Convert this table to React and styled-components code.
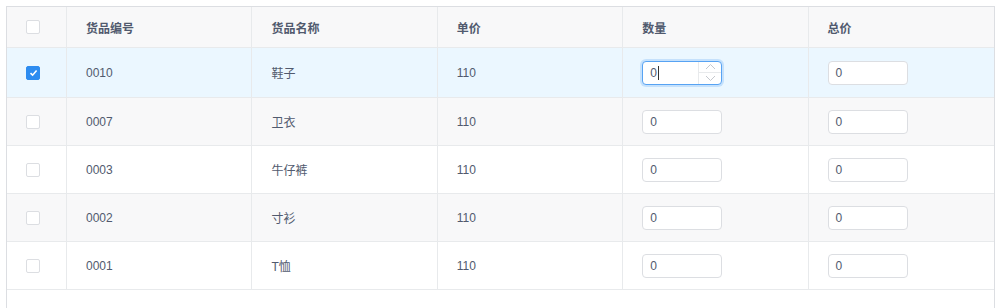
import styled, { createGlobalStyle } from "styled-components"

const GlobalStyle = createGlobalStyle`
  body {
    margin: 0;
    background: #fff;
    font-family: "Liberation Sans", "Noto Sans CJK SC", sans-serif;
  }
`

const goods = [
  { id: "0010", name: "鞋子", price: 110, count: 0, total: 0, checked: true },
  { id: "0007", name: "卫衣", price: 110, count: 0, total: 0 },
  { id: "0003", name: "牛仔裤", price: 110, count: 0, total: 0 },
  { id: "0002", name: "寸衫", price: 110, count: 0, total: 0 },
  { id: "0001", name: "T恤", price: 110, count: 0, total: 0 },
]

const Page = styled.div`
  padding: 6px 8px 0 6px;
`

const TableBox = styled.div`
  border: 1px solid #dcdee2;
  border-bottom: none;
  height: 301px;
  overflow: hidden;
  font-size: 12px;
  color: #515a6e;
`

const Row = styled.div`
  display: grid;
  grid-template-columns: 60px repeat(5, 1fr);
  height: ${props => props.head ? "40px" : props.first ? "49px" : "47px"};
  border-bottom: 1px solid #e8eaec;
  background: ${props => props.head ? "#f8f8f9" : props.active ? "#ebf7ff" : props.stripe ? "#f8f8f9" : "#fff"};
  font-weight: ${props => props.head ? 700 : 400};
`

const Cell = styled.div`
  display: flex;
  align-items: center;
  padding-left: 19px;
  border-right: ${props => props.last ? "none" : "1px solid #e8eaec"};
  color: #515a6e;
`

const Check = styled.span`
  width: 14px;
  height: 14px;
  box-sizing: border-box;
  border-radius: 2px;
  border: 1px solid ${props => props.checked ? "#2d8cf0" : "#dcdee2"};
  background: ${props => props.checked ? "#2d8cf0" : "#fff"};
  display: flex;
  align-items: center;
  justify-content: center;
`

const Field = styled.div`
  width: 80px;
  height: 24px;
  box-sizing: border-box;
  border: 1px solid ${props => props.focused ? "#57a3f3" : "#dcdee2"};
  box-shadow: ${props => props.focused ? "0 0 0 2px rgba(45,140,240,.2)" : "none"};
  border-radius: 4px;
  background: #fff;
  display: flex;
  align-items: stretch;
  font-weight: 400;
`

const FieldText = styled.span`
  flex: 1;
  display: flex;
  align-items: center;
  padding-left: 7px;
  font-size: 12px;
  color: #515a6e;
`

const Caret = styled.span`
  width: 1px;
  height: 14px;
  background: #333;
  margin-left: 1px;
`

const Handler = styled.div`
  width: 22px;
  border-left: 1px solid #e8eaec;
  display: flex;
  flex-direction: column;
`

const Step = styled.div`
  flex: 1;
  display: flex;
  align-items: center;
  justify-content: center;
  border-top: ${props => props.down ? "1px solid #e8eaec" : "none"};
`

const Tick = () => (
  <svg width="9" height="8" viewBox="0 0 9 8">
    <path d="M1.5 4.2 L3.6 6.2 L7.6 1.6" fill="none" stroke="#fff" strokeWidth="1.6" />
  </svg>
)

const Arrow = ({ up }) => (
  <svg width="11" height="7" viewBox="0 0 11 7">
    <path d={up ? "M1 6 L5.5 1.5 L10 6" : "M1 1 L5.5 5.5 L10 1"} fill="none" stroke="#c5c8ce" strokeWidth="1" />
  </svg>
)

const NumberInput = ({ value, focused }) => (
  <Field focused={focused}>
    <FieldText>
      {value}
      {focused && <Caret />}
    </FieldText>
    {focused && (
      <Handler>
        <Step><Arrow up /></Step>
        <Step down><Arrow /></Step>
      </Handler>
    )}
  </Field>
)

const App = () => {
  return (
    <Page>
      <GlobalStyle />
      <TableBox>
        <Row head>
          <Cell><Check /></Cell>
          <Cell>货品编号</Cell>
          <Cell>货品名称</Cell>
          <Cell>单价</Cell>
          <Cell>数量</Cell>
          <Cell last>总价</Cell>
        </Row>
        {goods.map((item, i) => (
          <Row key={item.id} first={i === 0} active={item.checked} stripe={i % 2 === 1}>
            <Cell>
              <Check checked={item.checked}>{item.checked && <Tick />}</Check>
            </Cell>
            <Cell>{item.id}</Cell>
            <Cell>{item.name}</Cell>
            <Cell>{item.price}</Cell>
            <Cell><NumberInput value={item.count} focused={item.checked} /></Cell>
            <Cell last><NumberInput value={item.total} /></Cell>
          </Row>
        ))}
      </TableBox>
    </Page>
  )
}

export default App
